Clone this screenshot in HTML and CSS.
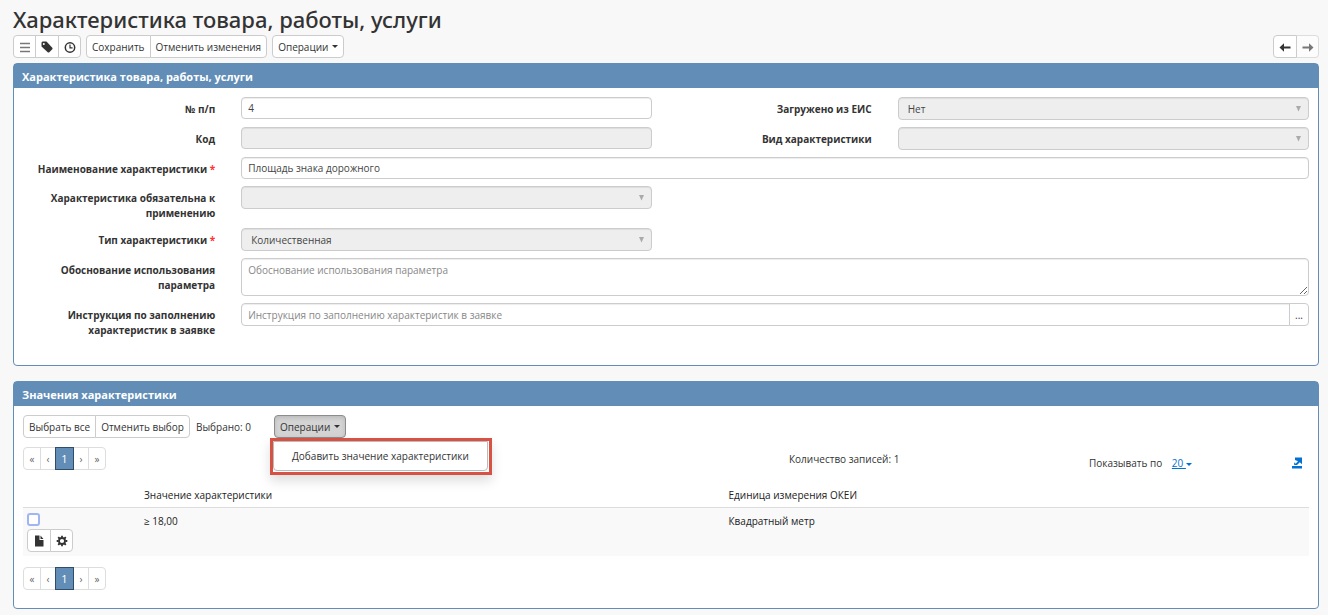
FILE: index.html
```html
<!DOCTYPE html>
<html lang="ru">
<head>
<meta charset="utf-8">
<title>Характеристика товара, работы, услуги</title>
<link rel="stylesheet" href="styles.css">
</head>
<body>
<main class="page">
  <h1 class="title">Характеристика товара, работы, услуги</h1>
  <div class="toolbar">
    <div class="group">
      <button class="btn icon slim" type="button" aria-label="Меню"><svg width="12" height="12" viewBox="0 0 12 12"><path d="M1 2.500h10M1 6.500h10M1 10.500h10" stroke="#777" stroke-width="1.600"/></svg></button>
      <button class="btn icon" type="button" aria-label="Метка"><svg width="12" height="12" viewBox="0 0 12 12"><path fill="#333" fill-rule="evenodd" d="M.5 1.5 1.5.6h4L11.5 7v1L8 11.6H7L.5 5.5zM2.8 2a1 1 0 1 0 0 2 1 1 0 0 0 0-2z"/></svg></button>
      <button class="btn icon" type="button" aria-label="История"><svg width="12" height="12" viewBox="0 0 12 12"><circle cx="6" cy="6.500" r="4.7" fill="none" stroke="#333" stroke-width="1.5"/><path d="M6 3.500v3.4h2.6" fill="none" stroke="#333" stroke-width="1.2"/></svg></button>
    </div>
    <div class="group">
      <button class="btn" type="button">Сохранить</button>
      <button class="btn" type="button">Отменить изменения</button>
    </div>
    <button class="btn" type="button">Операции<span class="caret"></span></button>
    <div class="group end">
      <button class="btn icon" type="button" aria-label="Назад"><svg width="12" height="12" viewBox="0 0 12 12"><path fill="#333" d="M.5 6.500 5 2.300V5.500h6.500v2H5v3.200z"/></svg></button>
      <button class="btn icon faded" type="button" aria-label="Вперёд" disabled><svg width="12" height="12" viewBox="0 0 12 12"><path fill="#777" d="M11.5 6.500 7 2.300V5.500H.5v2H7v3.200z"/></svg></button>
    </div>
  </div>

  <section class="panel">
    <h2 class="heading">Характеристика товара, работы, услуги</h2>
    <form class="form">
      <label class="label" for="num">№ п/п</label>
      <input class="field" id="num" type="text" value="4">
      <label class="label" for="eis">Загружено из ЕИС</label>
      <select class="field select" id="eis" disabled><option>Нет</option></select>

      <label class="label" for="code">Код</label>
      <input class="field" id="code" type="text" disabled>
      <label class="label" for="kind">Вид характеристики</label>
      <select class="field select" id="kind" disabled><option></option></select>

      <label class="label" for="name">Наименование характеристики <span class="star">*</span></label>
      <input class="field wide" id="name" type="text" value="Площадь знака дорожного">

      <label class="label first" for="must">Характеристика обязательна к применению</label>
      <select class="field select" id="must" disabled><option></option></select>

      <label class="label first" for="type">Тип характеристики <span class="star">*</span></label>
      <select class="field select" id="type" disabled><option>Количественная</option></select>

      <label class="label first" for="reason">Обоснование использования параметра</label>
      <textarea class="field area wide" id="reason" placeholder="Обоснование использования параметра"></textarea>

      <label class="label" for="guide">Инструкция по заполнению характеристик в заявке</label>
      <div class="combo wide">
        <input class="field" id="guide" type="text" placeholder="Инструкция по заполнению характеристик в заявке">
        <button class="btn more" type="button" aria-label="Выбрать">...</button>
      </div>
    </form>
  </section>

  <section class="panel">
    <h2 class="heading">Значения характеристики</h2>
    <div class="content">
      <div class="actions">
        <div class="group">
          <button class="btn" type="button">Выбрать все</button>
          <button class="btn" type="button">Отменить выбор</button>
        </div>
        <span class="picked">Выбрано: 0</span>
        <div class="dropdown">
          <button class="btn active" type="button">Операции<span class="caret"></span></button>
          <div class="mark"><div class="menu"><button class="item" type="button">Добавить значение характеристики</button></div></div>
        </div>
      </div>
      <div class="summary">
        <nav class="pager"><button type="button">«</button><button class="step" type="button">‹</button><button class="current" type="button">1</button><button class="step" type="button">›</button><button type="button">»</button></nav>
        <span class="count">Количество записей: 1</span>
        <span class="sizes">Показывать по <a class="link" href="#">20 </a><span class="caret blue"></span></span>
        <a class="export" href="#" aria-label="Экспорт"><svg width="12" height="12" viewBox="0 0 12 12"><path fill="#0070d2" d="M4 .5h7v6.8L8.800 5.200 6 8H3.200V5.300l1.500 1.500L7 4.200 4 3zM1 9h10v2.500H1z"/></svg></a>
      </div>
      <table class="table">
        <thead><tr><th class="tools"></th><th>Значение характеристики</th><th>Единица измерения ОКЕИ</th></tr></thead>
        <tbody><tr>
          <td class="tools">
            <input class="check" type="checkbox" aria-label="Выбрать запись">
            <div class="group">
              <button class="btn icon" type="button" aria-label="Открыть"><svg width="12" height="12" viewBox="0 0 12 12"><path fill="#333" d="M2 .5h4.500V5H10.500v6.500H2zM7.500.5l3 3.500h-3z"/></svg></button>
              <button class="btn icon" type="button" aria-label="Настройки"><svg width="12" height="12" viewBox="0 0 12 12"><circle cx="6" cy="6" r="3" fill="none" stroke="#333" stroke-width="1.800"/><path d="M6 .7v1.800M6 9.500v1.800M.7 6h1.800M9.500 6h1.800M2.200 2.200l1.300 1.300M8.500 8.500l1.300 1.300M2.200 9.800l1.300-1.300M8.500 3.500l1.300-1.300" stroke="#333" stroke-width="1.800"/></svg></button>
            </div>
          </td>
          <td>≥ 18,00</td><td>Квадратный метр</td>
        </tr></tbody>
      </table>
      <nav class="pager"><button type="button">«</button><button class="step" type="button">‹</button><button class="current" type="button">1</button><button class="step" type="button">›</button><button type="button">»</button></nav>
    </div>
  </section>
</main>
</body>
</html>
```
FILE: styles.css
```css
* { box-sizing: border-box; }
body { margin: 0; background: #f8f8f8; color: #333; font: 10px/16px "Open Sans", "Noto Sans", sans-serif; }
button, input, select, textarea { font: inherit; color: inherit; margin: 0; }
svg { display: block; }
.page { padding: 5px 9px 6px 13px; }
.title { margin: 0; font-size: 22px; line-height: 28px; font-weight: 500; font-family: "Noto Sans", sans-serif; }
.toolbar { display: flex; gap: 5px; padding: 2px 0 5px; }
.group { display: inline-flex; vertical-align: top; }
.end { margin-left: auto; }
.btn { height: 23px; padding: 0 5px; background: #fff; border: 1px solid #ccc; border-radius: 4px; display: inline-flex; align-items: center; justify-content: center; white-space: nowrap; }
.group .btn + .btn { margin-left: -1px; border-top-left-radius: 0; border-bottom-left-radius: 0; }
.group .btn:not(:last-child) { border-top-right-radius: 0; border-bottom-right-radius: 0; }
.group .icon { width: 24px; padding: 0; }
.group .slim, .group .icon:last-child { width: 23px; }
.group .faded { background: #fcfcfc; border-color: #ddd #ddd #ddd #ccc; }
.caret { display: inline-block; margin-left: 4px; border: 3px solid transparent; border-top-color: currentColor; border-bottom: 0; vertical-align: middle; }
.panel { border: 1px solid #618db7; border-radius: 4px; background: #fff; margin-bottom: 15px; }
.panel:last-child { margin-bottom: 0; }
.heading { margin: 0; padding: 5px 8px 3px; background: #618db7; color: #fff; font-size: 11px; line-height: 16px; font-weight: 700; }
.form { display: grid; grid-template-columns: minmax(0, 192fr) minmax(0, 411fr) minmax(0, 193fr) minmax(0, 411fr); column-gap: 26px; row-gap: 7px; align-items: start; padding: 9px 9px 27px; }
.label { text-align: right; font-weight: 700; padding: 5px 0 0; line-height: 15px; }
.first { grid-column: 1; }
.star { color: #f33; }
.field { width: 100%; min-width: 0; height: 22px; padding: 0 6px; border: 1px solid #ccc; border-radius: 4px; background: #fff; color: #444; box-shadow: inset 0 1px 1px #00000013; display: block; }
.field:disabled { background: #eee; opacity: 1; }
.field::placeholder { color: #888; opacity: 1; }
.select { appearance: none; height: 23px; padding: 0 9px; }
.select:disabled { background: #eee url("data:image/svg+xml,%3Csvg xmlns='http://www.w3.org/2000/svg' width='5' height='6'%3E%3Cpath d='M0 0h5L2.500 5.500z' fill='%23aaa'/%3E%3C/svg%3E") no-repeat right 7px center; }
.wide { grid-column: 2 / -1; }
.area { height: 38px; padding: 3px 6px; resize: both; }
.combo { display: flex; }
.combo .field { border-radius: 4px 0 0 4px; height: 23px; }
.more { margin-left: -1px; width: 20px; flex: none; border-radius: 0 4px 4px 0; }
.content { padding: 9px 9px 18px; }
.actions { display: flex; align-items: center; }
.picked { margin-left: 6px; }
.dropdown { position: relative; margin-left: 23px; }
.active { background: #d4d4d4; border-color: #8c8c8c; box-shadow: inset 0 2px 4px #00000020; }
.mark { position: absolute; z-index: 2; top: 100%; left: -4px; border: 3px solid #d75245; box-shadow: 0 6px 12px #0002; background: #fff; }
.menu { margin: 0 1px 1px 0; padding: 6px 0; border: 1px solid #bbb; border-radius: 0 0 4px 4px; }
.item { display: block; border: 0; padding: 0 18px; background: none; white-space: nowrap; line-height: 16px; }
.summary { display: grid; grid-template-columns: 766fr 300fr 202fr 18px; align-items: start; padding: 9px 0 0; min-height: 47px; }
.pager { display: flex; }
.pager button { width: 18px; height: 23px; padding: 0; border: 1px solid #ddd; background: #fff; color: #666; margin-left: -1px; }
.pager button:first-child { margin-left: 0; border-radius: 4px 0 0 4px; }
.pager button:last-child { border-radius: 0 4px 4px 0; }
.pager .step { width: 16px; }
.pager .current { width: 19px; font-size: 11px; position: relative; background: #618db7; border-color: #2f4d68; color: #fff; }
.count { padding-top: 4px; }
.sizes { padding-top: 8px; }
.link { color: #0070d2; margin-left: 7px; white-space: pre; }
.blue { color: #0070d2; margin-left: 0; }
.export { padding-top: 10px; }
.table { width: 100%; table-layout: fixed; border-collapse: collapse; margin-bottom: 11px; }
.table th { font-weight: 400; text-align: left; color: #222; padding: 2px 4px 4px; border-bottom: 1px solid #ddd; }
.table td { background: #f9f9f9; vertical-align: top; padding: 5px 4px 4px; color: #222; }
.table .tools { width: 117px; }
.check { appearance: none; display: block; width: 13px; height: 13px; margin-bottom: 3px; border: 2px solid #a0b5f2; border-radius: 3px; background: #fff; }
```
